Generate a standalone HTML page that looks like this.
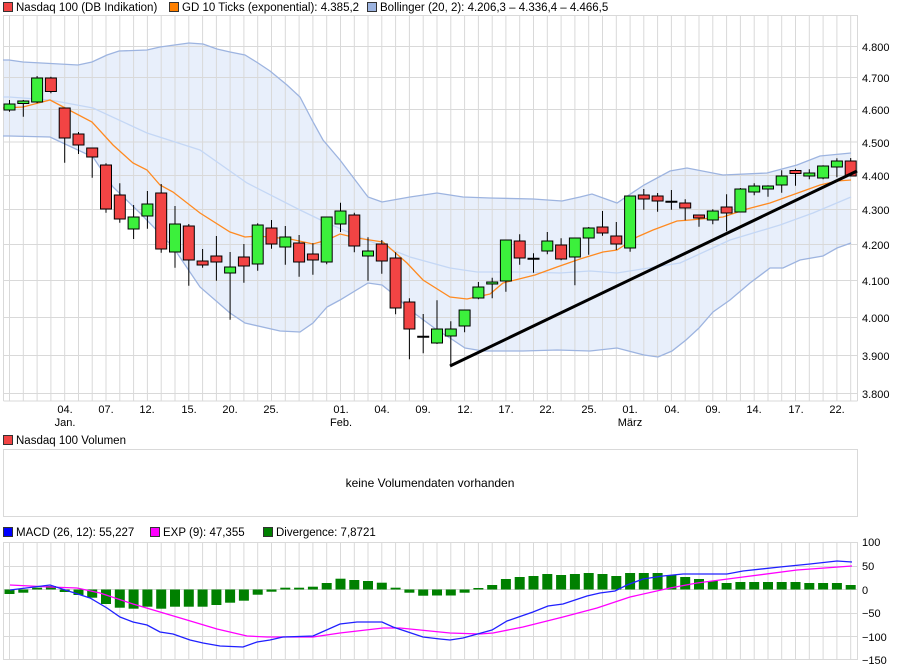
<!DOCTYPE html>
<html><head><meta charset="utf-8"><style>
body{margin:0;background:#fff;width:900px;height:670px;overflow:hidden}
svg{display:block;font-family:"Liberation Sans",Arial,sans-serif;font-size:11px}
.r{fill:#f24444;stroke:#000;stroke-width:1}
.g{fill:#3cf03c;stroke:#000;stroke-width:1}
.w{stroke:#000;stroke-width:1}
.b{fill:#008000}
</style></head><body>
<svg width="900" height="670" viewBox="0 0 900 670">
<!-- legend -->
<rect x="3.5" y="2.5" width="9" height="9" fill="#f24444" stroke="#333"/>
<text x="16" y="11" font-size="11.5">Nasdaq 100 (DB Indikation)</text>
<rect x="169.5" y="2.5" width="9" height="9" fill="#ff8000" stroke="#333"/>
<text x="182" y="11" font-size="11.5">GD 10 Ticks (exponential): 4.385,2</text>
<rect x="367.5" y="2.5" width="9" height="9" fill="#9db4e0" stroke="#333"/>
<text x="380" y="11" font-size="11.5">Bollinger (20, 2): 4.206,3 – 4.336,4 – 4.466,5</text>

<!-- bollinger fill -->
<polygon fill="#e8effb" points="3,60 9,60 23,62 78,65 92,62 107,55 119,51 147,50 160,47 189,43 203,44 217,49 230,52 245,55 258,63 270,71 287,85 300,97 312,120 323,140 340,160 368,197 382,202 410,197 437,193 463,197 490,198 533,199 562,201 580,197 592,194 617,203 644,185 670,171 687,168 723,175 767,173 797,165 820,156 851,153 851,243 837,248 823,256 800,260 783,268 770,268 750,283 730,300 713,312 699,328 686,340 672,351 658,357 644,355 617,348 590,351 557,350 523,351 483,351 465,348 450,338 437,330 410,310 397,297 382,285 368,283 340,300 327,307 313,323 300,332 280,331 245,323 230,313 200,287 173,247 140,213 113,187 93,157 50,137 9,136 3,136"/>

<!-- grid -->
<g stroke="#d9d9d9" stroke-width="1" fill="none">
<path d="M3.5 15V401M857.5 15V401M3.5 401H857.5M3 15.5H858M3 46.5H858M3 77.5H858M3 109.5H858M3 142H858M3 175.5H858M3 209.5H858M3 244.5H858M3 280.5H858M3 317.5H858M3 355.5H858M3 393.5H858"/>
<path d="M9.5 15V401M23.3 15V401M37.1 15V401M50.9 15V401M64.7 15V401M78.5 15V401M92.2 15V401M106 15V401M119.8 15V401M133.6 15V401M147.4 15V401M161.2 15V401M175 15V401M188.8 15V401M202.6 15V401M216.4 15V401M230.1 15V401M243.9 15V401M257.7 15V401M271.5 15V401M285.3 15V401M299.1 15V401M312.9 15V401M326.7 15V401M340.5 15V401M354.3 15V401M368 15V401M381.8 15V401M395.6 15V401M409.4 15V401M423.2 15V401M437 15V401M450.8 15V401M464.6 15V401M478.4 15V401M492.2 15V401M505.9 15V401M519.7 15V401M533.5 15V401M547.3 15V401M561.1 15V401M574.9 15V401M588.7 15V401M602.5 15V401M616.3 15V401M630.1 15V401M643.8 15V401M657.6 15V401M671.4 15V401M685.2 15V401M699 15V401M712.8 15V401M726.6 15V401M740.4 15V401M754.2 15V401M768 15V401M781.7 15V401M795.5 15V401M809.3 15V401M823.1 15V401M836.9 15V401M850.7 15V401"/>
</g>

<!-- bands -->
<g fill="none" stroke-width="1.3">
<polyline stroke="#9db4e0" points="3,60 9,60 23,62 78,65 92,62 107,55 119,51 147,50 160,47 189,43 203,44 217,49 230,52 245,55 258,63 270,71 287,85 300,97 312,120 323,140 340,160 368,197 382,202 410,197 437,193 463,197 490,198 533,199 562,201 580,197 592,194 617,203 644,185 670,171 687,168 723,175 767,173 797,165 820,156 851,153"/>
<polyline stroke="#9db4e0" points="3,136 9,136 50,137 93,157 113,187 140,213 173,247 200,287 230,313 245,323 280,331 300,332 313,323 327,307 340,300 368,283 382,285 397,297 410,310 437,330 450,338 465,348 483,351 523,351 557,350 590,351 617,348 644,355 658,357 672,351 686,340 699,328 713,312 730,300 750,283 770,268 783,268 800,260 823,256 837,248 851,243"/>
<polyline stroke="#c4d7f5" points="3,97 9,97 50,100 93,108 147,133 200,150 247,183 300,210 327,223 367,240 410,257 450,268 477,272 523,272 560,273 590,271 617,273 680,263 730,240 780,225 813,213 851,197"/>
<polyline stroke="#ff8a20" points="3,108 23,107 50,100 92,122 113,145 133,163 147,170 160,185 173,192 200,213 230,232 245,237 258,236 290,239 313,244 327,240 340,234 357,238 383,242 407,263 423,280 450,297 467,299 490,294 503,283 523,278 535,275 557,267 580,259 603,252 617,250 637,237 653,230 677,221 690,220 723,217 747,209 770,203 820,185 837,181 851,180"/>
</g>

<!-- wicks -->
<path class="w" d="M9.5 100V111.7M23.3 100V116.7M37.1 76V103.3M50.9 76.7V93.3M64.7 108V162.7M78.5 132V154M92.2 148V177.7M106 163.3V212.7M119.8 183.3V222.7M133.6 205V239M147.4 191V228.7M161.2 184V252.7M175 206V267.7M188.8 224V285.7M202.6 249V267.7M216.4 236V280.7M230.1 252V319.7M243.9 244V282.7M257.7 223.3V270.7M271.5 220V248.7M285.3 226V264.7M299.1 235V276.7M312.9 243.3V274.7M326.7 217V264.3M340.5 202.7V232M354.3 212.7V252.3M368 237.3V280.7M381.8 240V273.7M395.6 252.3V314.3M409.4 298.3V359.3M423.2 314V353.3M437 300.3V344M450.8 321.3V365.3M464.6 310.3V332.3M478.4 282V299.3M492.2 277.7V298.3M505.9 240.3V291.7M519.7 234.3V264.7M533.5 253.3V272.7M547.3 232V254.3M561.1 238.3V260.3M574.9 238.3V285.3M588.7 227V254.7M602.5 211V235.7M616.3 222V250M630.1 196.3V251.7M643.8 189V209.7M657.6 193V211.7M671.4 190V209.7M685.2 199.3V220.3M699 215.3V226.7M712.8 209.3V224.3M726.6 194.3V231.3M740.4 188V212.3M754.2 183.3V195.3M768 185.3V196.7M781.7 170.3V192.7M795.5 168.7V185.7M809.3 169.3V179.3M823.1 165.3V179.3M836.9 158.3V177.3M850.7 158V176.3"/>
<!-- dojis -->
<path stroke="#000" stroke-width="2" d="M417.2 336.7H429.2M527.5 258.7H539.5M665.4 201.7H677.4"/>
<!-- bodies -->
<rect class="g" x="4" y="104" width="11" height="6"/>
<rect class="g" x="17.8" y="101" width="11" height="2.5"/>
<rect class="g" x="31.6" y="78" width="11" height="24"/>
<rect class="r" x="45.4" y="78" width="11" height="13.5"/>
<rect class="r" x="59.2" y="108" width="11" height="30"/>
<rect class="r" x="73" y="134" width="11" height="11"/>
<rect class="r" x="86.7" y="148" width="11" height="9"/>
<rect class="r" x="100.5" y="165" width="11" height="44"/>
<rect class="r" x="114.3" y="195" width="11" height="24"/>
<rect class="g" x="128.1" y="217" width="11" height="12"/>
<rect class="g" x="141.9" y="204" width="11" height="12"/>
<rect class="r" x="155.7" y="193" width="11" height="56"/>
<rect class="g" x="169.5" y="224" width="11" height="28"/>
<rect class="r" x="183.3" y="226" width="11" height="34"/>
<rect class="r" x="197.1" y="261" width="11" height="4"/>
<rect class="r" x="210.9" y="256" width="11" height="6"/>
<rect class="g" x="224.6" y="267" width="11" height="6"/>
<rect class="r" x="238.4" y="257" width="11" height="9"/>
<rect class="g" x="252.2" y="225" width="11" height="39"/>
<rect class="r" x="266" y="228" width="11" height="16"/>
<rect class="g" x="279.8" y="237" width="11" height="10"/>
<rect class="r" x="293.6" y="243" width="11" height="19"/>
<rect class="r" x="307.4" y="254" width="11" height="6"/>
<rect class="g" x="321.2" y="217" width="11" height="45"/>
<rect class="g" x="335" y="211" width="11" height="13"/>
<rect class="r" x="348.8" y="215" width="11" height="31"/>
<rect class="g" x="362.5" y="251" width="11" height="5"/>
<rect class="r" x="376.3" y="244" width="11" height="17"/>
<rect class="r" x="390.1" y="258" width="11" height="50"/>
<rect class="r" x="403.9" y="302" width="11" height="27"/>
<rect class="g" x="431.5" y="329" width="11" height="14"/>
<rect class="g" x="445.3" y="329" width="11" height="7"/>
<rect class="g" x="459.1" y="310" width="11" height="16"/>
<rect class="g" x="472.9" y="287" width="11" height="11"/>
<rect class="g" x="486.7" y="282" width="11" height="2"/>
<rect class="g" x="500.4" y="240" width="11" height="41"/>
<rect class="r" x="514.2" y="241" width="11" height="17"/>
<rect class="g" x="541.8" y="241" width="11" height="10"/>
<rect class="r" x="555.6" y="245" width="11" height="14"/>
<rect class="g" x="569.4" y="238" width="11" height="19"/>
<rect class="g" x="583.2" y="228" width="11" height="10"/>
<rect class="r" x="597" y="227" width="11" height="6"/>
<rect class="r" x="610.8" y="236" width="11" height="8"/>
<rect class="g" x="624.6" y="196" width="11" height="52"/>
<rect class="r" x="638.3" y="195" width="11" height="4"/>
<rect class="r" x="652.1" y="196" width="11" height="5"/>
<rect class="r" x="679.7" y="203" width="11" height="5"/>
<rect class="r" x="693.5" y="215" width="11" height="3"/>
<rect class="g" x="707.3" y="211" width="11" height="9"/>
<rect class="r" x="721.1" y="207" width="11" height="6"/>
<rect class="g" x="734.9" y="189" width="11" height="23"/>
<rect class="g" x="748.7" y="186" width="11" height="6"/>
<rect class="g" x="762.5" y="186" width="11" height="3"/>
<rect class="g" x="776.2" y="176" width="11" height="9"/>
<rect class="r" x="790" y="170.5" width="11" height="3"/>
<rect class="g" x="803.8" y="173" width="11" height="3"/>
<rect class="g" x="817.6" y="166" width="11" height="12"/>
<rect class="g" x="831.4" y="161" width="11" height="6"/>
<rect class="r" x="845.2" y="161" width="11" height="15"/>
<!-- trend line -->
<line x1="450" y1="366" x2="857" y2="171" stroke="#000" stroke-width="3"/>

<!-- price axis -->
<g fill="#000">
<text x="862" y="51">4.800</text><text x="862" y="82">4.700</text><text x="862" y="114">4.600</text><text x="862" y="147">4.500</text><text x="862" y="180">4.400</text><text x="862" y="214">4.300</text><text x="862" y="249">4.200</text><text x="862" y="285">4.100</text><text x="862" y="322">4.000</text><text x="862" y="360">3.900</text><text x="862" y="398">3.800</text>
</g>
<g fill="#000" text-anchor="middle">
<text x="65" y="413">04.</text><text x="65" y="426">Jan.</text>
<text x="106" y="413">07.</text><text x="147" y="413">12.</text><text x="189" y="413">15.</text><text x="230" y="413">20.</text><text x="271" y="413">25.</text>
<text x="341" y="413">01.</text><text x="341" y="426">Feb.</text>
<text x="382" y="413">04.</text><text x="423" y="413">09.</text><text x="465" y="413">12.</text><text x="506" y="413">17.</text><text x="547" y="413">22.</text><text x="589" y="413">25.</text>
<text x="630" y="413">01.</text><text x="630" y="426">März</text>
<text x="672" y="413">04.</text><text x="713" y="413">09.</text><text x="754" y="413">14.</text><text x="796" y="413">17.</text><text x="837" y="413">22.</text>
</g>

<!-- volume -->
<rect x="3.5" y="435.5" width="9" height="9" fill="#f24444" stroke="#333"/>
<text x="16" y="444" font-size="11.5">Nasdaq 100 Volumen</text>
<rect x="3.5" y="449.5" width="854" height="67" fill="none" stroke="#d9d9d9"/>
<text x="430" y="487" text-anchor="middle" font-size="12">keine Volumendaten vorhanden</text>

<!-- MACD legend -->
<rect x="3.5" y="527.5" width="9" height="9" fill="#0000ff" stroke="#333"/>
<text x="16" y="536" font-size="11.5">MACD (26, 12): 55,227</text>
<rect x="150.5" y="527.5" width="9" height="9" fill="#ff00ff" stroke="#333"/>
<text x="163" y="536" font-size="11.5">EXP (9): 47,355</text>
<rect x="263.5" y="527.5" width="9" height="9" fill="#008000" stroke="#333"/>
<text x="276" y="536" font-size="11.5">Divergence: 7,8721</text>

<g stroke="#d9d9d9" fill="none">
<path d="M3.5 542V660M857.5 542V660M3 542.5H858M3 566.5H858M3 589.5H858M3 613.5H858M3 636.5H858M3 659.5H858"/>
<path d="M9.5 542V660M23.3 542V660M37.1 542V660M50.9 542V660M64.7 542V660M78.5 542V660M92.2 542V660M106 542V660M119.8 542V660M133.6 542V660M147.4 542V660M161.2 542V660M175 542V660M188.8 542V660M202.6 542V660M216.4 542V660M230.1 542V660M243.9 542V660M257.7 542V660M271.5 542V660M285.3 542V660M299.1 542V660M312.9 542V660M326.7 542V660M340.5 542V660M354.3 542V660M368 542V660M381.8 542V660M395.6 542V660M409.4 542V660M423.2 542V660M437 542V660M450.8 542V660M464.6 542V660M478.4 542V660M492.2 542V660M505.9 542V660M519.7 542V660M533.5 542V660M547.3 542V660M561.1 542V660M574.9 542V660M588.7 542V660M602.5 542V660M616.3 542V660M630.1 542V660M643.8 542V660M657.6 542V660M671.4 542V660M685.2 542V660M699 542V660M712.8 542V660M726.6 542V660M740.4 542V660M754.2 542V660M768 542V660M781.7 542V660M795.5 542V660M809.3 542V660M823.1 542V660M836.9 542V660M850.7 542V660"/>
</g>
<g class="b">
<rect x="4.5" y="589.5" width="10" height="4.5"/>
<rect x="18.3" y="589.5" width="10" height="3.2"/>
<rect x="32.1" y="587.7" width="10" height="1.8"/>
<rect x="45.9" y="586" width="10" height="3.5"/>
<rect x="59.7" y="589.5" width="10" height="2.5"/>
<rect x="73.5" y="589.5" width="10" height="5.5"/>
<rect x="87.2" y="589.5" width="10" height="8.2"/>
<rect x="101" y="589.5" width="10" height="14.5"/>
<rect x="114.8" y="589.5" width="10" height="18.2"/>
<rect x="128.6" y="589.5" width="10" height="19.2"/>
<rect x="142.4" y="589.5" width="10" height="17.2"/>
<rect x="156.2" y="589.5" width="10" height="19.2"/>
<rect x="170" y="589.5" width="10" height="17.2"/>
<rect x="183.8" y="589.5" width="10" height="17.2"/>
<rect x="197.6" y="589.5" width="10" height="17.2"/>
<rect x="211.4" y="589.5" width="10" height="15.5"/>
<rect x="225.1" y="589.5" width="10" height="13.2"/>
<rect x="238.9" y="589.5" width="10" height="11.2"/>
<rect x="252.7" y="589.5" width="10" height="5.2"/>
<rect x="266.5" y="589.5" width="10" height="2.2"/>
<rect x="280.3" y="587.7" width="10" height="1.8"/>
<rect x="294.1" y="587.7" width="10" height="1.8"/>
<rect x="307.9" y="586.7" width="10" height="2.8"/>
<rect x="321.7" y="583" width="10" height="6.5"/>
<rect x="335.5" y="578.7" width="10" height="10.8"/>
<rect x="349.3" y="580" width="10" height="9.5"/>
<rect x="363" y="581" width="10" height="8.5"/>
<rect x="376.8" y="582.7" width="10" height="6.8"/>
<rect x="390.6" y="587.7" width="10" height="1.8"/>
<rect x="404.4" y="589.5" width="10" height="3.2"/>
<rect x="418.2" y="589.5" width="10" height="6.2"/>
<rect x="432" y="589.5" width="10" height="6"/>
<rect x="445.8" y="589.5" width="10" height="6"/>
<rect x="459.6" y="589.5" width="10" height="3.2"/>
<rect x="473.4" y="588" width="10" height="1.5"/>
<rect x="487.2" y="585" width="10" height="4.5"/>
<rect x="500.9" y="579" width="10" height="10.5"/>
<rect x="514.7" y="577" width="10" height="12.5"/>
<rect x="528.5" y="576" width="10" height="13.5"/>
<rect x="542.3" y="574" width="10" height="15.5"/>
<rect x="556.1" y="575" width="10" height="14.5"/>
<rect x="569.9" y="574" width="10" height="15.5"/>
<rect x="583.7" y="573" width="10" height="16.5"/>
<rect x="597.5" y="574" width="10" height="15.5"/>
<rect x="611.3" y="576" width="10" height="13.5"/>
<rect x="625.1" y="573" width="10" height="16.5"/>
<rect x="638.8" y="573" width="10" height="16.5"/>
<rect x="652.6" y="573" width="10" height="16.5"/>
<rect x="666.4" y="575" width="10" height="14.5"/>
<rect x="680.2" y="577" width="10" height="12.5"/>
<rect x="694" y="579" width="10" height="10.5"/>
<rect x="707.8" y="581" width="10" height="8.5"/>
<rect x="721.6" y="583" width="10" height="6.5"/>
<rect x="735.4" y="582" width="10" height="7.5"/>
<rect x="749.2" y="582" width="10" height="7.5"/>
<rect x="763" y="582" width="10" height="7.5"/>
<rect x="776.7" y="582" width="10" height="7.5"/>
<rect x="790.5" y="582" width="10" height="7.5"/>
<rect x="804.3" y="583" width="10" height="6.5"/>
<rect x="818.1" y="583" width="10" height="6.5"/>
<rect x="831.9" y="583" width="10" height="6.5"/>
<rect x="845.7" y="585" width="10" height="4.5"/>
</g>
<g fill="none" stroke-width="1.3">
<polyline stroke="#ff00ff" points="10,585 50,587 77,588 100,593 133,604 160,612 187,620 217,629 247,636 267,637 313,637 340,633 383,628 400,628 430,631 450,633 480,634 493,633 523,627 563,617 597,608 630,597 670,588 697,583 743,577 797,570 852,566"/>
<polyline stroke="#2020ff" points="10,590 50,585 90,598 107,608 120,617 133,622 147,625 160,632 173,634 190,640 203,643 220,646 243,647 257,642 270,640 283,637 313,636 340,624 357,622 382,622 393,627 423,637 440,639 450,640 463,638 492,630 507,621 533,612 548,606 563,604 587,596 600,593 615,591 627,585 643,579 663,576 683,574 727,574 743,571 780,567 810,564 837,561 852,562"/>
</g>
<g fill="#000">
<text x="862" y="546">100</text><text x="862" y="570">50</text><text x="862" y="594">0</text><text x="862" y="617">−50</text><text x="862" y="641">−100</text><text x="862" y="664">−150</text>
</g>
</svg>
</body></html>
